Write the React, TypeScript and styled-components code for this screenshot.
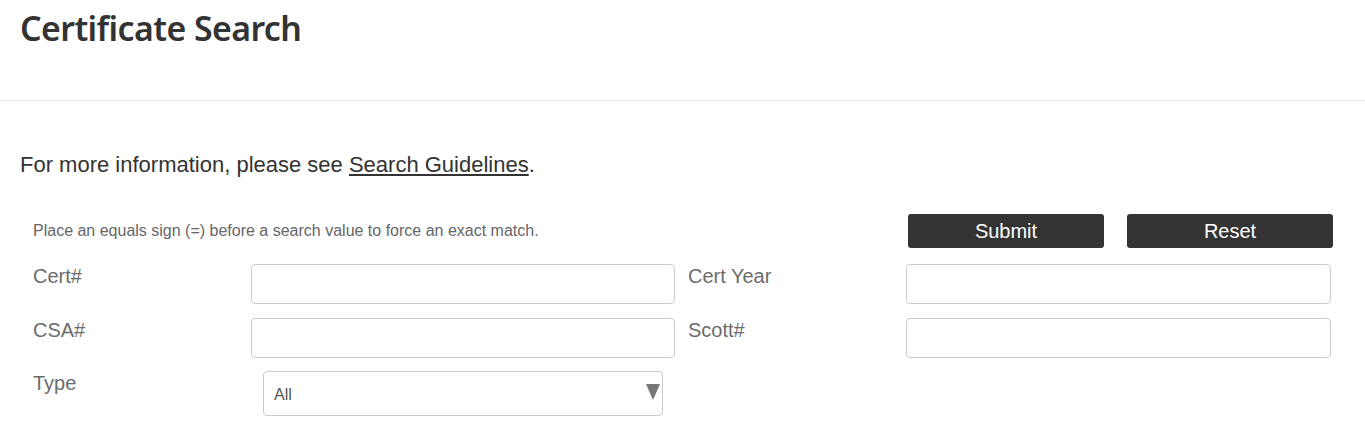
import styled, { createGlobalStyle } from "styled-components";

const GlobalStyle = createGlobalStyle`
  body {
    margin: 0;
    background: #fff;
    font-family: "Liberation Sans", Arial, sans-serif;
  }
`;

const Header = styled.header`
  height: 101px;
  border-bottom: 1px solid #e6e6e6;
  box-sizing: border-box;
  padding: 6px 20px 0;
`;

const Title = styled.h1`
  margin: 0;
  font-family: "Noto Sans", sans-serif;
  font-weight: 600;
  font-size: 35px;
  letter-spacing: -0.6px;
  color: #333;
  line-height: 44px;
  transform: scaleX(0.968);
  transform-origin: left;
`;

const Main = styled.main`
  padding: 50px 20px 0;
`;

const Intro = styled.p`
  margin: 0;
  font-size: 22px;
  line-height: 28px;
  color: #333;

  a {
    color: #333;
    text-decoration: underline;
  }
`;

const TopRow = styled.div`
  display: flex;
  align-items: center;
  margin-top: 35px;
  padding-left: 13px;
`;

const Hint = styled.span`
  flex: 1;
  font-size: 16px;
  color: #666;
`;

const Actions = styled.div`
  display: flex;
  gap: 23px;
  margin-right: 12px;
`;

const Button = styled.button<{ $w: number }>`
  width: ${(p) => p.$w}px;
  height: 34px;
  background: #333;
  color: #fff;
  border: none;
  border-radius: 3px;
  font-family: "Liberation Sans", Arial, sans-serif;
  font-size: 20px;
  cursor: pointer;
`;

const Form = styled.div`
  display: grid;
  grid-template-columns: 205px 424px 205px 425px;
  column-gap: 13px;
  row-gap: 14px;
  padding-left: 13px;
  margin-top: 16px;
  align-items: start;
`;

const Label = styled.label`
  font-size: 20px;
  color: #6c6c6c;
  line-height: 22px;
  padding-top: 1px;
`;

const Input = styled.input`
  box-sizing: border-box;
  height: 40px;
  width: 100%;
  border: 1px solid #ccc;
  border-radius: 4px;
  margin: 0;
`;

const SelectWrap = styled.div`
  position: relative;
  margin-left: 12px;
  margin-top: -1px;
  width: 400px;
`;

const Select = styled.select`
  box-sizing: border-box;
  width: 100%;
  height: 45px;
  border: 1px solid #ccc;
  border-radius: 4px;
  background: #fff;
  appearance: none;
  padding: 2px 10px 0;
  font-family: "Liberation Sans", Arial, sans-serif;
  font-size: 16px;
  color: #555;
`;

const Arrow = styled.span`
  position: absolute;
  right: 3px;
  top: 13px;
  width: 0;
  height: 0;
  border-left: 7px solid transparent;
  border-right: 7px solid transparent;
  border-top: 16px solid #777;
  pointer-events: none;
`;

export default function App() {
  return (
    <>
      <GlobalStyle />
      <Header>
        <Title>Certificate Search</Title>
      </Header>
      <Main>
        <Intro>
          For more information, please see <a href="#">Search Guidelines</a>.
        </Intro>
        <TopRow>
          <Hint>Place an equals sign (=) before a search value to force an exact match.</Hint>
          <Actions>
            <Button $w={196}>Submit</Button>
            <Button $w={206}>Reset</Button>
          </Actions>
        </TopRow>
        <Form>
          <Label>Cert#</Label>
          <Input />
          <Label>Cert Year</Label>
          <Input />
          <Label>CSA#</Label>
          <Input />
          <Label>Scott#</Label>
          <Input />
          <Label style={{ marginTop: -1 }}>Type</Label>
          <SelectWrap>
            <Select defaultValue="All">
              <option>All</option>
            </Select>
            <Arrow />
          </SelectWrap>
        </Form>
      </Main>
    </>
  );
}
